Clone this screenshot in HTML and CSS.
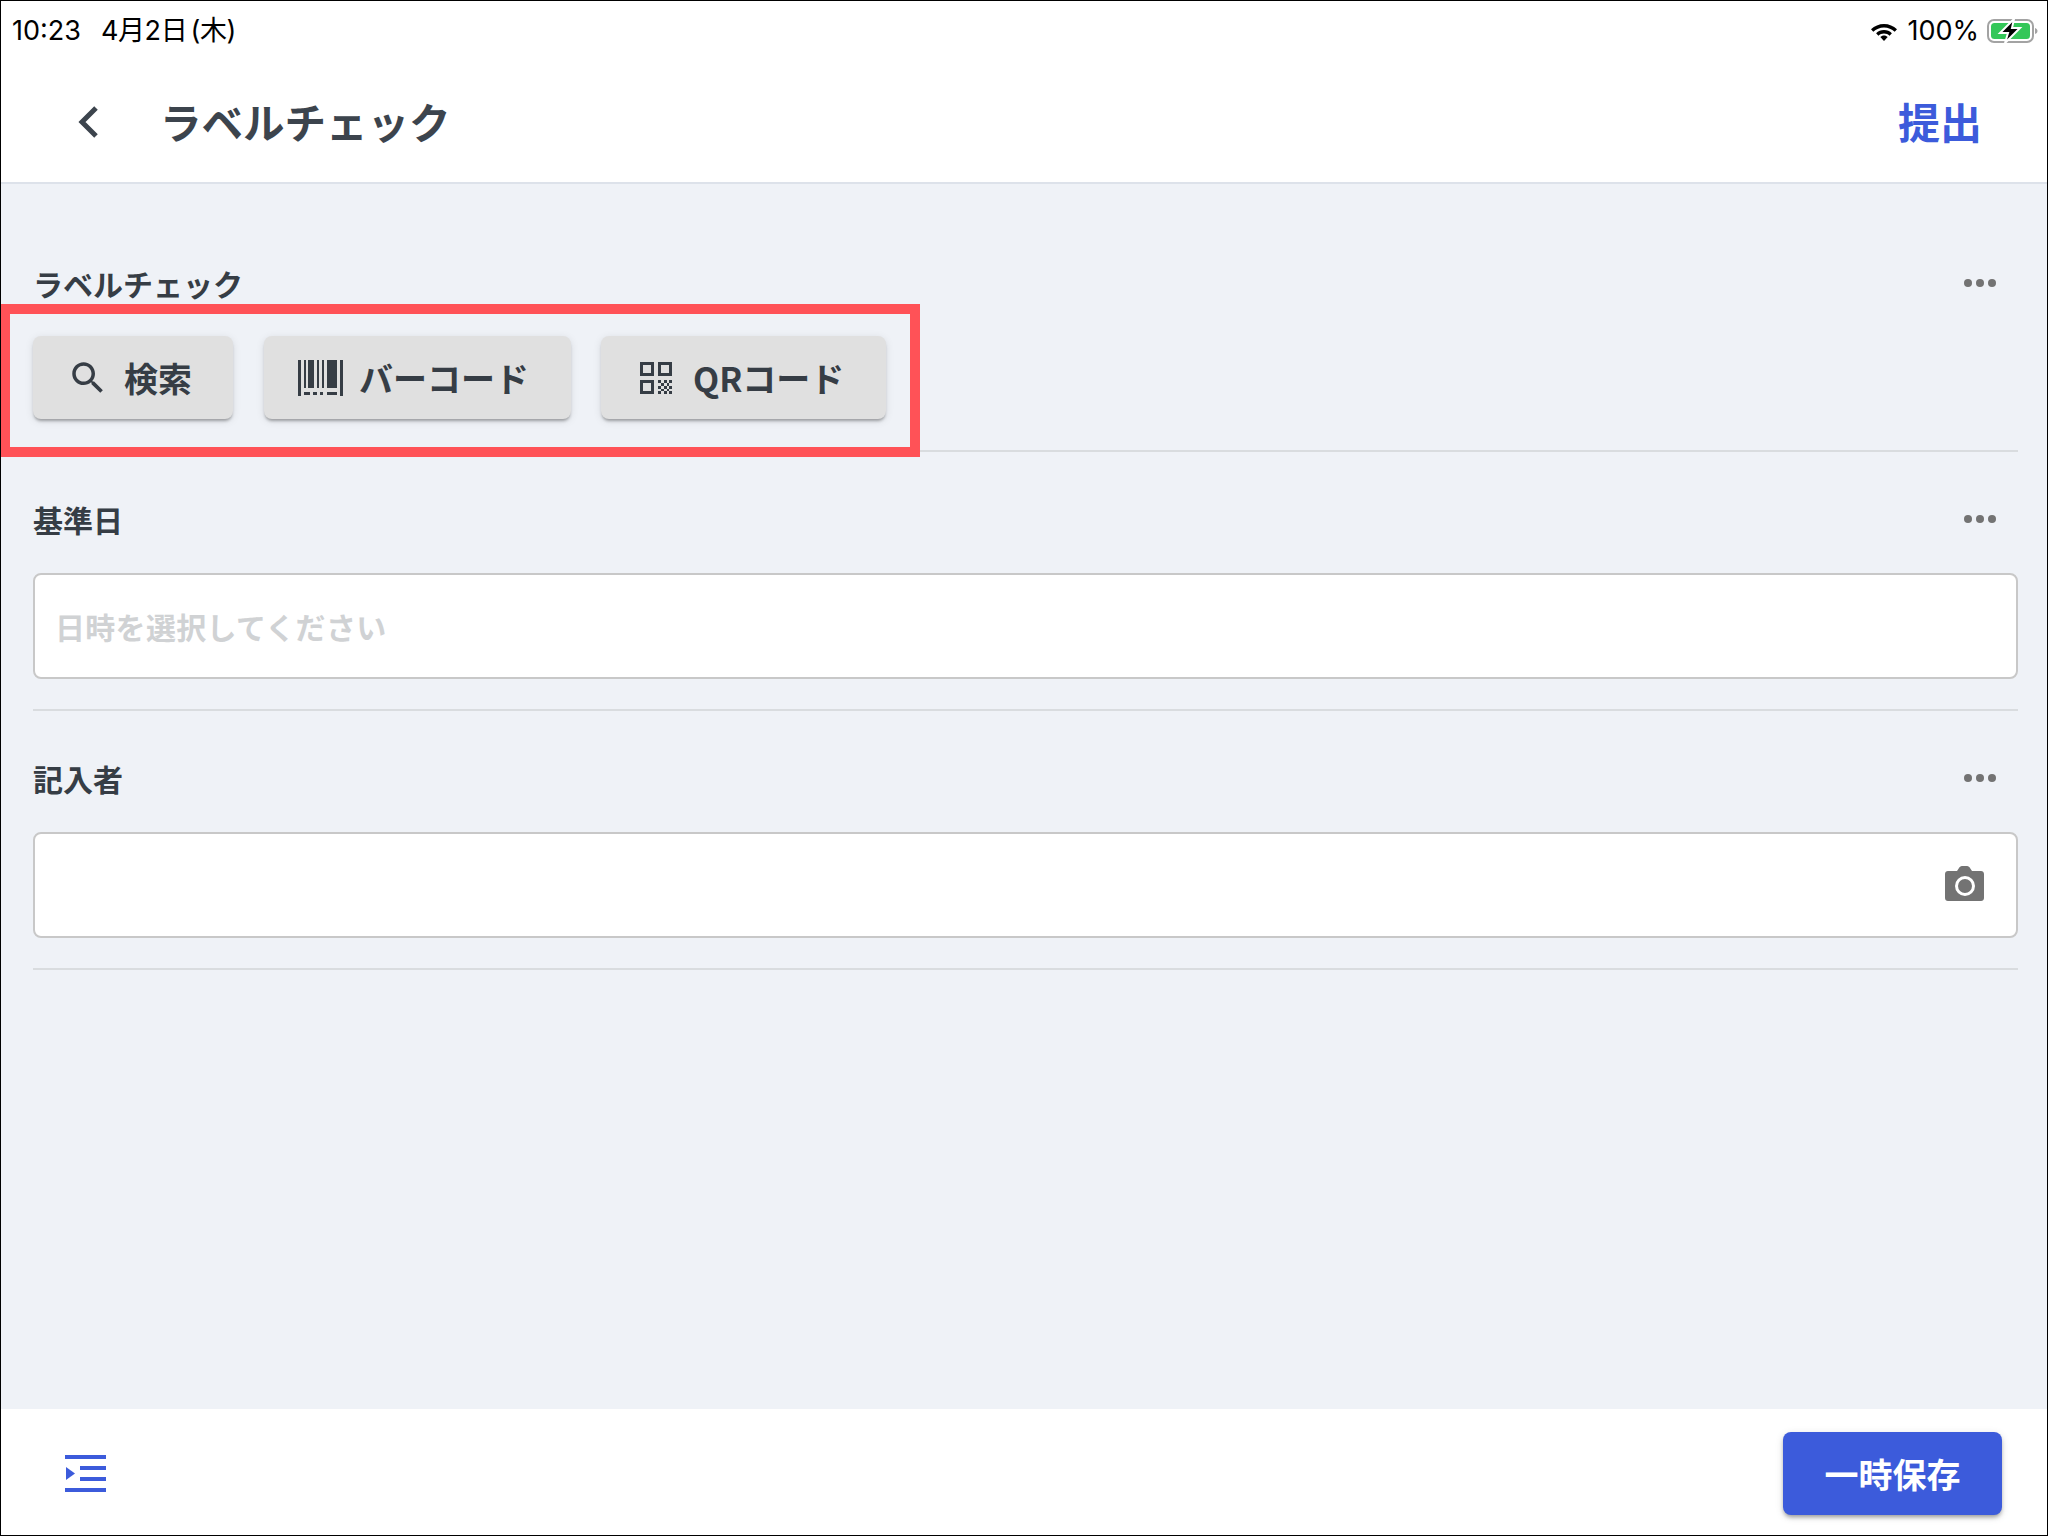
FILE: index.html
```html
<!DOCTYPE html>
<html lang="ja">
<head>
    <meta charset="UTF-8">
    <title>ラベルチェック</title>
    <link rel="stylesheet" href="styles.css">
</head>
<body>
    <div class="frame">
        <div class="status-bar">
            <div class="status-left">
                <span>10:23</span>
                <span class="status-date">4月2日 (木)</span>
            </div>
            <div class="status-right">
                <svg class="wifi" viewBox="0 0 28 20" width="28" height="20">
                    <path d="M14 3C9 3 4.500 5 1 8.300l2.300 2.500C6.100 8 9.900 6.400 14 6.400s7.900 1.600 10.700 4.400L27 8.300C23.500 5 19 3 14 3z" fill="#000"/>
                    <path d="M14 9c-3 0-5.800 1.200-7.900 3.200l2.300 2.500c1.500-1.400 3.500-2.300 5.600-2.300s4.100.9 5.600 2.300l2.300-2.500C19.800 10.200 17 9 14 9z" fill="#000"/>
                    <path d="M14 14.600c-1.500 0-2.800.6-3.700 1.500L14 20l3.700-3.900c-.9-.9-2.200-1.500-3.700-1.500z" fill="#000"/>
                </svg>
                <span>100%</span>
                <svg class="battery" viewBox="0 0 51 26" width="51" height="26">
                    <rect x="1" y="2" width="45" height="22" rx="6" fill="none" stroke="#a3a3a3" stroke-width="2"/>
                    <rect x="4" y="5" width="39" height="16" rx="3.500" fill="#34c759"/>
                    <path d="M48 10c1.500.5 2.500 1.500 2.500 3s-1 2.500-2.500 3z" fill="#a3a3a3"/>
                    <path d="M27 1L13 15h8l-3 10 15-15h-8z" fill="#000" stroke="#fff" stroke-width="2"/>
                </svg>
            </div>
        </div>
        <header class="nav-bar">
            <div class="nav-left">
                <svg class="back" viewBox="0 0 24 34" width="24" height="34">
                    <path d="M20 3L6 17l14 14" fill="none" stroke="#3c444d" stroke-width="5"/>
                </svg>
                <h1 class="page-title">ラベルチェック</h1>
            </div>
            <a class="submit-link">提出</a>
        </header>
        <main class="content">
            <section class="field">
                <div class="field-head">
                    <h2 class="field-title">ラベルチェック</h2>
                    <div class="more"><i></i><i></i><i></i></div>
                </div>
                <div class="button-row">
                    <button class="scan-btn btn-search">
                        <svg viewBox="0 0 24 24" width="42" height="42"><path d="M15.500 14h-.79l-.28-.27C15.410 12.590 16 11.110 16 9.500 16 5.910 13.090 3 9.500 3S3 5.910 3 9.500 5.910 16 9.500 16c1.610 0 3.090-.59 4.230-1.570l.27.28v.79l5 4.990L20.490 19l-4.990-5zm-6 0C7.010 14 5 11.990 5 9.500S7.010 5 9.500 5 14 7.010 14 9.500 11.990 14 9.500 14z" fill="#363d45"/></svg>
                        <span>検索</span>
                    </button>
                    <button class="scan-btn btn-barcode">
                        <svg viewBox="0 0 46 36" width="46" height="36" fill="#363d45">
                            <rect x="0" y="0" width="3" height="36"/>
                            <rect x="6" y="0" width="2" height="28"/>
                            <rect x="10" y="0" width="6" height="28"/>
                            <rect x="19" y="0" width="2" height="28"/>
                            <rect x="24" y="0" width="2" height="28"/>
                            <rect x="29" y="0" width="10" height="28"/>
                            <rect x="42" y="0" width="3" height="36"/>
                            <rect x="6" y="32" width="6" height="3"/>
                            <rect x="15" y="32" width="4" height="3"/>
                            <rect x="22" y="32" width="3" height="3"/>
                            <rect x="29" y="32" width="10" height="3"/>
                        </svg>
                        <span>バーコード</span>
                    </button>
                    <button class="scan-btn btn-qr">
                        <svg viewBox="0 0 32 32" width="32" height="32" fill="#363d45">
                            <path d="M0 0h14v14H0zM3 3v8h8V3zM18 0h14v14H18zM21 3v8h8V3zM0 18h14v14H0zM3 21v8h8v-8z" fill-rule="evenodd"/>
                            <path d="M18 18h3v3h-3zM24 18h3v3h-3zM29 18h3v3h-3zM21 21h3v3h-3zM27 21h2v3h-2zM18 24h3v3h-3zM24 24h3v3h-3zM29 24h3v3h-3zM21 27h3v2h-3zM27 27h2v2h-2zM18 29h3v3h-3zM24 29h3v3h-3zM29 29h3v3h-3z"/>
                        </svg>
                        <span>QRコード</span>
                    </button>
                    <div class="highlight"></div>
                </div>
            </section>
            <section class="field">
                <div class="field-head">
                    <h2 class="field-title">基準日</h2>
                    <div class="more"><i></i><i></i><i></i></div>
                </div>
                <div class="text-box">
                    <span class="placeholder">日時を選択してください</span>
                </div>
            </section>
            <section class="field">
                <div class="field-head">
                    <h2 class="field-title">記入者</h2>
                    <div class="more"><i></i><i></i><i></i></div>
                </div>
                <div class="text-box text-box-camera">
                    <svg viewBox="0 0 39 35" width="39" height="35">
                        <path d="M12 5l2-3c.5-1 1.500-2 3-2h5c1.500 0 2.500 1 3 2l2 3h9c1.700 0 3 1.300 3 3v24c0 1.700-1.300 3-3 3H3c-1.700 0-3-1.300-3-3V8c0-1.700 1.300-3 3-3z" fill="#737373"/>
                        <circle cx="20" cy="20" r="8.500" fill="none" stroke="#fff" stroke-width="3"/>
                    </svg>
                </div>
            </section>
        </main>
        <footer class="footer">
            <svg class="indent-icon" viewBox="0 0 42 37" width="42" height="37" fill="#3c5bdb">
                <rect x="0" y="0" width="41" height="4"/>
                <rect x="15" y="11" width="26" height="4"/>
                <rect x="15" y="22" width="26" height="4"/>
                <rect x="0" y="33" width="41" height="4"/>
                <path d="M1 12l9 6.500-9 6.500z"/>
            </svg>
            <button class="save-btn">一時保存</button>
        </footer>
    </div>
</body>
</html>
```

FILE: styles.css
```css
* {
    box-sizing: border-box;
}
body {
    margin: 0;
    font-family: "Noto Sans CJK JP", "Noto Sans", sans-serif;
    color: #363d45;
}
.frame {
    width: 2048px;
    height: 1536px;
    border: 1px solid #000;
    background-color: #eff2f7;
    display: flex;
    flex-direction: column;
    overflow: hidden;
}
.status-bar {
    height: 60px;
    background-color: white;
    display: flex;
    justify-content: space-between;
    align-items: center;
    padding: 0 9px 0 11px;
    font-family: Inter, "Noto Sans CJK JP", sans-serif;
    font-size: 27px;
    line-height: 32px;
    color: #000;
}
.status-left {
    display: flex;
    align-items: center;
    gap: 20px;
}
.status-date {
    letter-spacing: -0.4px;
    word-spacing: -4px;
}
.status-right {
    display: flex;
    align-items: center;
    gap: 9px;
}
.battery {
    margin-left: -1px;
}
.nav-bar {
    height: 123px;
    background-color: white;
    border-bottom: 2px solid #dde2ea;
    display: flex;
    justify-content: space-between;
    align-items: center;
    padding: 0 65px 0 75px;
}
.nav-left {
    display: flex;
    align-items: center;
    gap: 60px;
}
.back {
    display: block;
}
.page-title {
    margin: 0 0 2px;
    font-size: 41.5px;
    font-weight: 700;
    color: #3c444d;
}
.submit-link {
    margin-bottom: 2px;
    font-size: 42px;
    font-weight: 700;
    color: #3c5bdb;
}
.content {
    flex: 1;
    padding: 32px 29px 0 32px;
}
.field {
    padding: 48px 0 32px;
    border-bottom: 2px solid #d9dcdf;
}
.field-head {
    height: 40px;
    display: flex;
    justify-content: space-between;
    align-items: center;
    padding: 0 22px 3px 0;
    margin-bottom: 32px;
}
.field-title {
    margin: 0;
    font-size: 30px;
    font-weight: 700;
    color: #363d45;
}
.more {
    display: flex;
    gap: 4px;
}
.more i {
    width: 8px;
    height: 8px;
    border-radius: 50%;
    background-color: #737373;
}
.button-row {
    position: relative;
    display: flex;
    gap: 30px;
    margin-bottom: -1px;
}
.highlight {
    position: absolute;
    top: -32px;
    left: -33px;
    width: 920px;
    height: 153px;
    border: 10px solid #ff5257;
}
.scan-btn {
    height: 83px;
    border: 0;
    border-radius: 8px;
    background-color: #e0e0e0;
    box-shadow: 0 3px 3px -1px rgba(0, 0, 0, 0.3), 0 2px 8px rgba(0, 0, 0, 0.1);
    display: flex;
    align-items: center;
    font-family: inherit;
    font-size: 34px;
    font-weight: 700;
    color: #363d45;
    padding: 0;
}
.btn-search {
    width: 200px;
    margin-right: 1px;
    padding-left: 34px;
    gap: 15px;
}
.btn-barcode {
    width: 307px;
    padding-left: 34px;
    gap: 15px;
}
.btn-qr {
    width: 285px;
    padding-left: 39px;
    gap: 21px;
}
.text-box {
    height: 106px;
    margin: 33px 0 -2px;
    background-color: white;
    border: 2px solid #c8c8c8;
    border-radius: 8px;
    display: flex;
    align-items: center;
    padding: 0 20px;
}
.text-box-camera {
    justify-content: flex-end;
    padding: 0 32px 3px 20px;
}
.placeholder {
    font-size: 30px;
    font-weight: 700;
    letter-spacing: 0.3px;
    color: #d0d2d4;
}
.footer {
    height: 126px;
    background-color: white;
    display: flex;
    justify-content: space-between;
    align-items: center;
    padding: 2px 45px 0 64px;
}
.save-btn {
    width: 219px;
    height: 83px;
    border: 0;
    border-radius: 8px;
    background-color: #3c5bdb;
    box-shadow: 0 3px 4px -1px rgba(0, 0, 0, 0.35), 0 2px 8px rgba(0, 0, 0, 0.12);
    font-family: inherit;
    font-size: 34px;
    font-weight: 700;
    color: white;
    padding: 0;
}
```
